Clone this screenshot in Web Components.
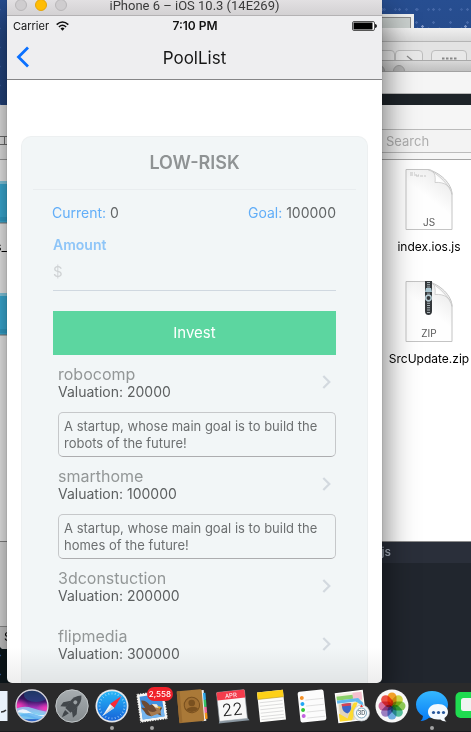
<!DOCTYPE html>
<html lang="en">
<head>
<meta charset="utf-8">
<title>PoolList</title>
<style>
html,body{margin:0;height:100%;overflow:hidden;background:#0e191e}
body{font-family:Inter,"Liberation Sans",sans-serif}
</style>
</head>
<body>
<desktop-scene></desktop-scene>
<script>
function define(name, markup, setup) {
  const t = document.createElement('template');
  t.innerHTML = markup;
  customElements.define(name, class extends HTMLElement {
    constructor() {
      super();
      this.attachShadow({ mode: 'open' }).append(t.content.cloneNode(true));
    }
    connectedCallback() { if (setup) setup(this, this.shadowRoot); }
  });
}

/* ---------- background windows ---------- */
define('toolbar-window', `
<style>
:host{display:block;overflow:hidden;background:#f4f4f4}
.title{height:14px;box-sizing:border-box;background:linear-gradient(#f0f0f0,#d9d9d9);border-bottom:1px solid #b5b5b5}
.tools{height:18px;display:flex;gap:8px;padding:8px 4px 0 0;box-sizing:border-box;justify-content:flex-end;background:#e3e3e3;overflow:hidden}
.tools span{flex:none;box-sizing:border-box;width:36px;height:22px;border:1px solid #bdbdbd;border-radius:4px;background:#e8e8e8}
.nav{display:flex}
.nav span+span{width:28px}
.tools svg{display:block}
</style>
<div class="title"></div>
<div class="tools">
 <div class="nav"><span></span><span><svg width="26" height="12"><path d="M11 5l6 5" stroke="#888" stroke-width="1.3" fill="none"/></svg></span></div>
 <span><svg width="34" height="12"><path d="M10 7.500h15" stroke="#888" stroke-width="2" stroke-dasharray="2.500 1.500" fill="none"/></svg></span>
</div>`);

define('plain-window', `
<style>
:host{display:block;background:#1e2429}
.title{height:12px;box-sizing:border-box;display:flex;justify-content:flex-end;padding:4px 66px 0 0;overflow:hidden;background:linear-gradient(#d8d8d8,#c0c0c0);border-top:1px solid #a9a9a9;border-bottom:1px solid #a2a2a2}
i{width:12px;height:12px;flex:none;box-sizing:border-box;border-radius:50%;background:#b0b0b0;border:1px solid #999;margin-left:8px}
.bar{height:22px;box-sizing:border-box;background:#f5f5f5;border-bottom:1px solid #bbb}
</style>
<div class="title"><i></i><i></i></div><div class="bar"></div>`);

define('file-item', `
<style>
:host{display:flex;flex-direction:column;align-items:center;gap:8px}
svg{display:block}
.name{font:12px/16px Inter,"Liberation Sans",sans-serif;color:#000;white-space:nowrap;min-height:16px}
:host([kind=folder]) .name{align-self:flex-end}
text{font:10px Inter,"Liberation Sans",sans-serif;fill:#5a5a5a}
</style>
<svg width="64" height="64"></svg><span class="name"><slot></slot></span>`, (h, r) => {
  const kind = h.getAttribute('kind');
  const id = 'g' + kind;
  const page = `<defs><linearGradient id="${id}" x1="0" y1="1" x2="1" y2="0"><stop offset=".5" stop-color="#fff"/><stop offset="1" stop-color="#dcdcdc"/></linearGradient><linearGradient id="p${id}" x1="0" y1="1" x2=".6" y2="0"><stop offset=".6" stop-color="#fefefe"/><stop offset="1" stop-color="#ececec"/></linearGradient></defs>
   <path d="M9 2.500h22c12 3 24 14 24 25v35H9z" fill="url(#p${id})" stroke="#c4c4c4"/>
   <path d="M31 2.500c6 0 8 6 7 13 9-1 17 4 17 12C53 19 42 7 31 2.500z" fill="url(#${id})" stroke="#c2c2c2" stroke-width=".7"/>`;
  r.querySelector('svg').innerHTML = kind === 'folder'
    ? '<path d="M0 14h64v42H0z" fill="#40bbe8"/><path d="M0 14h64v3H0z" fill="#8fdcf6"/><path d="M0 51h64M0 53h64" stroke="#2c9ecb"/><path d="M0 56h64" stroke="#888"/>'
    : kind === 'zip'
    ? page + '<path d="M28 2h7v30q0 4-3.500 4t-3.500-4z" fill="#34383b"/><path d="M31.500 3v32" stroke="#a9b4b9" stroke-width="3" stroke-dasharray="1 1.300"/><path d="M29 9h5l1 4h-7z" fill="#a7c4cf"/><circle cx="31.500" cy="19" r="2.700" fill="#34383b" stroke="#b5cbd3" stroke-width="1.500"/><text x="32" y="58" text-anchor="middle">ZIP</text>'
    : page + '<path d="M13 6h5M13 8h9M19 9h10" stroke="#bbb" stroke-width=".8" stroke-dasharray="3 1"/><text x="32" y="59" text-anchor="middle">JS</text>';
});

define('finder-window', `
<style>
:host{display:flex;flex-direction:column;background:#fff;overflow:hidden;box-sizing:border-box;border-bottom:1px solid #8d8d8d}
.bar{height:55px;box-sizing:border-box;border-bottom:1px solid #a5a5a5;background:#f6f6f6;display:flex;justify-content:space-between;align-items:flex-start;padding-top:24px}
.view{width:8px;height:9px;margin-top:7px;border:1px solid #777;border-left:0;box-sizing:border-box;background:linear-gradient(90deg,transparent 4px,#777 4px 5px,transparent 5px)}
input{width:92px;height:24px;box-sizing:border-box;border:solid #bbb;border-width:1px 0;background:#f3f3f3;padding:0 0 0 7px;font:13px/20px Inter,"Liberation Sans",sans-serif;border-radius:0;outline:0;-webkit-appearance:none;appearance:none}
input::placeholder{color:#aeaeae;opacity:1}
.body{flex:1;display:flex;justify-content:space-between;padding-top:7px}
.col{display:flex;flex-direction:column;gap:24px;width:84px}
.left{width:64px;margin-left:-57px}
</style>
<div class="bar"><span class="view"></span><input type="search" placeholder="Search" aria-label="Search"></div>
<div class="body">
 <div class="col left"><file-item kind="folder">s_</file-item><file-item kind="folder"></file-item></div>
 <div class="col"><file-item kind="js">index.ios.js</file-item><file-item kind="zip">SrcUpdate.zip</file-item></div>
</div>`);

define('code-window', `
<style>
:host{display:block;background:#21262e}
.tab{height:22px;background:#2a2f3a;display:flex;justify-content:flex-end;font:12px/22px Inter,"Liberation Sans",sans-serif;color:#aab2c0;padding-right:80px;font-weight:500}
</style>
<div class="tab">js</div>`);

define('side-window', `
<style>
:host{display:flex;flex-direction:column;background:#eee;border-radius:0 0 0 4px;overflow:hidden}
.body{flex:1;border-bottom:1px solid #999}
.foot{height:22px;background:#d8d8d8;font:12px/20px Inter,"Liberation Sans",sans-serif;padding-left:4px;color:#000}
</style>
<div class="body"></div><div class="foot">S</div>`);

/* ---------- phone simulator ---------- */
define('sim-titlebar', `
<style>
:host{display:flex;align-items:center;height:16px;box-sizing:border-box;border-bottom:1px solid #b4b2b4;background:linear-gradient(#e2e0e2,#d3d1d3);padding:0 60px 0 8px;overflow:hidden}
.dots{display:flex;gap:8px;padding-bottom:5px}
i{width:12px;height:12px;box-sizing:border-box;border-radius:50%;background:#cfcdcf;border:1px solid #b9b7b9}
i.on{background:#ffbd05;border-color:#e5a50a}
b{flex:1;text-align:center;font:13px/12px Roboto,Inter,sans-serif;color:#3a3a3a;white-space:nowrap;padding-bottom:3px}
</style>
<div class="dots"><i></i><i class="on"></i><i></i></div><b>iPhone 6 – iOS 10.3 (14E269)</b>`);

define('status-bar', `
<style>
:host{display:grid;grid-template-columns:1fr auto 1fr;align-items:center;height:20px;padding:0 5px 0 6px;font:11px/20px Inter,"Liberation Sans",sans-serif;color:#111}
.l{display:flex;align-items:center;gap:7px}
.t{font-weight:600;font-size:12px}
.r{display:flex;justify-content:flex-end}
</style>
<span class="l">Carrier<svg width="13" height="10" viewBox="0 0 13 10"><g fill="none" stroke="#111" stroke-width="1.600"><path d="M.7 3.700Q6.500-1.700 12.300 3.700"/><path d="M2.900 6Q6.500 2.500 10.100 6"/></g><path d="M4.500 7.500Q6.500 5.700 8.500 7.500L6.500 9.700z" fill="#111"/></svg></span>
<span class="t">7:10 PM</span>
<span class="r"><svg width="25" height="10" viewBox="0 0 25 10"><rect x=".5" y=".5" width="22" height="9" rx="1.500" fill="#fff" stroke="#555"/><rect x="1.500" y="1.500" width="19" height="7" fill="#000"/><path d="M23.500 3.500h.5q1 1.500 0 3h-.5z" fill="#000" stroke="#000" stroke-width=".7"/></svg></span>`);

define('nav-bar', `
<style>
:host{display:grid;grid-template-columns:40px 1fr 40px;align-items:center;height:43px;border-bottom:1px solid #858587;font-family:Inter,"Liberation Sans",sans-serif}
button{border:0;background:none;padding:0 0 2px 9px;height:43px;display:flex;align-items:center;cursor:pointer}
h1{margin:0;font-size:17px;line-height:24px;font-weight:400;color:#151515;text-align:center}
</style>
<button aria-label="Back"><svg width="14" height="22" viewBox="0 0 14 22"><path d="M12 1.500L2.500 11l9.500 9.500" fill="none" stroke="#0a70ff" stroke-width="2.800"/></svg></button><h1><slot></slot></h1><span></span>`);

define('company-row', `
<style>
:host{display:block}
a{display:flex;align-items:center;justify-content:space-between;min-height:58px;box-sizing:border-box;padding:9px 5px 13px;text-decoration:none}
strong,span{display:block;font-weight:400}
strong{font-size:16px;line-height:20px;color:#939797}
span{font-size:14px;line-height:16px;color:#5d6061}
p{margin:-1px 0 0 5px;border:1px solid #c6c8ca;border-bottom-color:#adadaf;border-radius:5px;padding:5px 0 4px 5px;font-size:13px;line-height:17px;color:#6c6f70}
</style>
<a href="#"><div><strong></strong><span></span></div><svg width="9" height="14" viewBox="0 0 9 14"><path d="M1.300 1l6 6-6 6" fill="none" stroke="#d3d9df" stroke-width="2.200"/></svg></a>`, (h, r) => {
  r.querySelector('strong').textContent = h.getAttribute('name');
  r.querySelector('span').textContent = 'Valuation: ' + h.getAttribute('valuation');
  const about = h.getAttribute('about');
  if (about) { const p = document.createElement('p'); p.textContent = about; r.append(p); }
});

define('pool-card', `
<style>
:host{display:block;background:#f2f6f7;border:1px solid #edf0f1;border-bottom:0;border-radius:10px 10px 0 0;padding:0 11px;box-sizing:border-box}
h2{margin:0;font-size:18px;line-height:52px;font-weight:600;color:#8f9394;text-align:center;border-bottom:1px solid #e9edef}
.in{padding:0 20px}
.row{display:flex;justify-content:space-between;font-size:14px;line-height:18px;padding:14px 0 15px;color:#626566;margin-left:-1px}
em{font-style:normal;color:#62aef8}
label{display:block;font-size:14px;line-height:16px;font-weight:600;color:#8ec5f8}
input{display:block;width:100%;height:38px;box-sizing:border-box;border:0;border-bottom:1px solid #d0d8e0;background:none;padding:0 0 1px;margin:0 0 20px;font:15px/20px Inter,"Liberation Sans",sans-serif;border-radius:0;outline:0}
input::placeholder{color:#cfd2d4;opacity:1}
button{display:block;width:100%;height:44px;border:0;background:#5cd6a0;color:#fff;font:15px/20px Inter,"Liberation Sans",sans-serif;cursor:pointer}
</style>
<h2>LOW-RISK</h2>
<div class="in">
 <div class="row"><span><em>Current:</em> 0</span><span><em>Goal:</em> 100000</span></div>
 <label for="amount">Amount</label><input id="amount" placeholder="$">
 <button>Invest</button>
 <slot></slot>
</div>`);

define('phone-window', `
<style>
:host{display:flex;flex-direction:column;background:#fff;border-radius:0 0 5px 5px;overflow:hidden;box-shadow:0 0 1px rgba(0,0,0,.5),0 14px 32px 2px rgba(0,0,0,.55)}
header{background:#eeeef0}
main{flex:1;min-height:0;overflow:hidden;padding:56px 14px 0;display:flex;flex-direction:column}
pool-card{flex:1 0 auto}
.fade{height:36px;margin-top:-36px;flex:none;position:relative;background:linear-gradient(rgba(0,0,0,0),rgba(0,0,0,.07));pointer-events:none}
</style>
<sim-titlebar></sim-titlebar>
<header><status-bar></status-bar><nav-bar>PoolList</nav-bar></header>
<main><pool-card>
 <company-row name="robocomp" valuation="20000" about="A startup, whose main goal is to build the robots of the future!"></company-row>
 <company-row name="smarthome" valuation="100000" about="A startup, whose main goal is to build the homes of the future!"></company-row>
 <company-row name="3dconstuction" valuation="200000"></company-row>
 <company-row name="flipmedia" valuation="300000"></company-row>
</pool-card></main>
<div class="fade"></div>`);

/* ---------- dock ---------- */
const ticks = Array.from({ length: 24 }, (_, i) => `<path d="M20 6.500v2" transform="rotate(${i * 15} 20 20)" stroke="#bfe6ff" stroke-width=".6"/>`).join('');
const petals = ['#f9a01b', '#d3d83a', '#8bcb50', '#4fc09a', '#6aaee6', '#9b7cc4', '#dc6a9f', '#f4493e']
  .map((c, i) => `<rect x="15.500" y="6.500" width="9" height="13.500" rx="4.500" fill="${c}" opacity=".95" style="mix-blend-mode:multiply" transform="rotate(${i * 45} 20 20)"/>`).join('');
const icons = {
  finder: '<path d="M4 5h31.500v30H4z" fill="#e9f1fa"/><path d="M29 26q3 0 5-2" stroke="#333" stroke-width="1.500" fill="none"/>',
  siri: `<defs><linearGradient id="s" x2="0" y2="1"><stop offset="0" stop-color="#1b1030"/><stop offset=".35" stop-color="#3d1668"/><stop offset=".55" stop-color="#a434b8"/><stop offset=".75" stop-color="#5fb4e8"/><stop offset="1" stop-color="#2456c0"/></linearGradient><clipPath id="sc"><circle cx="20" cy="20" r="15.500"/></clipPath><radialGradient id="sg"><stop offset="0" stop-color="#ff36b5"/><stop offset="1" stop-color="#ff36b5" stop-opacity="0"/></radialGradient></defs>
   <circle cx="20" cy="20" r="16" fill="url(#s)"/><g clip-path="url(#sc)"><ellipse cx="6" cy="20" rx="11" ry="8" fill="url(#sg)"/><ellipse cx="35" cy="23" rx="11" ry="7" fill="url(#sg)"/><ellipse cx="24" cy="9" rx="12" ry="7" fill="#1d5d93" opacity=".5"/><path d="M3 23Q12 19 20 22T37 26V33H3z" fill="#8fd9f5" opacity=".75"/><path d="M3 27Q10 20 18 26T37 27Q30 35 20 30T3 27z" fill="#fff" opacity=".8"/><path d="M3 31Q15 25 22 28T37 31Q28 35 20 32T3 31z" fill="#5cb0f0" opacity=".8"/></g><circle cx="20" cy="20" r="16" fill="none" stroke="#d5d5dc" stroke-width="1.300"/>`,
  launchpad: `<defs><linearGradient id="l" x2="0" y2="1"><stop stop-color="#a7adb0"/><stop offset="1" stop-color="#858b8e"/></linearGradient></defs><circle cx="20" cy="20" r="16.200" fill="url(#l)" stroke="#c3c8ca" stroke-width="1"/><g transform="rotate(42 20 20)" fill="#42474b"><path d="M20 6q5.500 5 4.500 13l-1 7h-7l-1-7Q14.500 11 20 6z"/><path d="M15.500 17l-4.500 6 .5 5 5-4zM24.500 17l4.500 6-.5 5-5-4z"/><path d="M17.500 27.500h5l-1 4-1.500 3.500-1.500-3.500z"/><circle cx="20" cy="15" r="2" fill="#9aa0a3"/></g>`,
  safari: `<defs><linearGradient id="f" x2="0" y2="1"><stop stop-color="#25b7f8"/><stop offset="1" stop-color="#1863d8"/></linearGradient></defs><circle cx="20" cy="20" r="16.500" fill="#e5e7ea"/><circle cx="20" cy="20" r="14.800" fill="url(#f)"/>${ticks}<path d="M29.500 10L22.200 22 18 18z" fill="#fa2b36"/><path d="M10.500 30L18 18l4.200 4z" fill="#f5f5f5"/><path d="M10.500 30l9.600-10 2.100 2z" fill="#cdd2d8"/>`,
  mail: `<g transform="rotate(-8 20 20)"><rect x="6" y="6" width="28" height="29" fill="#f5f5f3"/><rect x="6" y="6" width="28" height="29" fill="none" stroke="#292929" stroke-width="1.400" stroke-dasharray="1.200 1.400"/><path d="M9 9h22v23H9z" fill="#4290df"/><path d="M9 22h22v10H9z" fill="#75b5ef"/><path d="M10 13q5 0 8 6l3-1 2 3 7 2-3 4 1 4-5-3-5 2q-5-1-6-5l-3-5 4 1q-3-4-3-8z" fill="#6d4a32"/><path d="M15 23q4 5 9 2l-2-4 5 2 1 5-5 1-5 1z" fill="#a77a4e"/><path d="M20 18l5 1 2 4-4-1z" fill="#f8ead2"/><path d="M25 21l4 1-2 2z" fill="#e9b021"/></g>`,
  contacts: `<g transform="rotate(-5 20 20)"><path d="M29 5h4v31h-4z" fill="#eee"/><path d="M32 8h2.500v7H32z" fill="#2fa7e8"/><path d="M32 15h2.500v7H32z" fill="#35c463"/><path d="M32 22h2.500v6H32z" fill="#ed6a9b"/><path d="M32 28h2.500v6H32z" fill="#f4941c"/><rect x="6" y="4" width="25" height="32" rx="1.500" fill="#aa7938"/><path d="M6 4h3v32H6z" fill="#9a6b30"/><circle cx="20" cy="19" r="7.700" fill="#a17033" stroke="#79501f" stroke-width="1"/><circle cx="20" cy="17" r="3.300" fill="#79501f"/><path d="M14 23.500q1-2 4-2.500h4q3 .5 4 2.500-6 5-12 0z" fill="#79501f"/></g>`,
  calendar: `<g transform="rotate(-6 20 20)"><path d="M6 33l-1 3h31l-2-3z" fill="#8996a0"/><rect x="6" y="5" width="28" height="29" rx="1" fill="#f8f8f8" stroke="#9ba3aa" stroke-width=".6"/><path d="M6 5h28v8H6z" fill="#f43c4c"/><text x="20" y="11.500" text-anchor="middle" font-size="6" fill="#fff">APR</text><text x="20" y="29.500" text-anchor="middle" font-size="17" font-weight="300" fill="#202020">22</text></g>`,
  notes: `<g transform="rotate(-6 20 20)"><path d="M6.500 5h26v30h-26z" fill="#fdfdfb"/><path d="M6.500 5h26v7h-26z" fill="#fdd018"/><path d="M6.500 12h26" stroke="#b99a30" stroke-width=".6"/><path d="M8 15.500h23M8 19h23M8 22.500h23M8 26h23M8 29.500h23M8 32.500h23" stroke="#c9c9c9" stroke-width=".6"/></g>`,
  reminders: `<g transform="rotate(-6 20 20)"><rect x="7" y="4.500" width="26" height="31" rx="2" fill="#fcfcfc"/><path d="M14 13.500h18M14 19.500h18M14 25.500h18M14 31.500h18" stroke="#d5d5d5" stroke-width=".7"/><circle cx="10.700" cy="11" r="2" fill="#f5922a"/><circle cx="10.700" cy="17" r="2" fill="#22a7f5"/><circle cx="10.700" cy="23" r="2" fill="#36c73a"/><circle cx="10.700" cy="29" r="2" fill="#c362e0"/></g>`,
  maps: `<g transform="rotate(-7 19 20)"><path d="M5 6h27v29H5z" fill="#f3efe2"/><path d="M5 9h17v4H5z" fill="#8bd16b"/><path d="M22 7h9v8h-9z" fill="#f6c0cf"/><path d="M5 13h22l5 6v3l-8-6H5z" fill="#62b9ee"/><path d="M7 17h14v17H7z" fill="#e2d5ba"/><path d="M6 35V26l8 6 8-15h4l-8 18z" fill="#fdda30"/><path d="M10 17h9v4q0 4-4.500 6Q10 25 10 21z" fill="#3c67c8"/><path d="M10 17h9v2.500h-9z" fill="#d64455"/><rect x="5" y="6" width="27" height="29" fill="none" stroke="#fff" stroke-width="1.300"/></g><circle cx="29.500" cy="27" r="8" fill="#f5f7f8" stroke="#b8c0c5" stroke-width=".7"/><circle cx="29.500" cy="27" r="5" fill="#fff" stroke="#5b8eaa" stroke-width=".8"/><text x="29.500" y="29" text-anchor="middle" font-size="5.500" font-weight="600" fill="#53646d">3D</text><path d="M29.500 18.500l1.500 2.500h-3z" fill="#e33"/>`,
  photos: `<circle cx="20" cy="20" r="16.500" fill="#f7f7f7"/>${petals}`,
  messages: `<defs><linearGradient id="m" x2="0" y2="1"><stop stop-color="#35b8ff"/><stop offset="1" stop-color="#087cf6"/></linearGradient></defs><path d="M20 5c9 0 16 6 16 13.500S29 32 20 32l-3-.3q-3 3-8.500 3.300 2.500-2 2.500-5-7-4-7-11.500C4 11 11 5 20 5z" fill="url(#m)"/><path d="M26 18c6 0 10 3.500 10 8 0 2.500-1.500 4.500-3.500 6 0 1.500.5 2.500 2 3.500-3 0-5-1-6-2h-2.500c-6 0-10-3-10-7.500s4-8 10-8z" fill="#f4f9fd"/><g fill="#26569b"><circle cx="21.500" cy="26.500" r="1.600"/><circle cx="26.500" cy="26.500" r="1.600"/><circle cx="31.500" cy="26.500" r="1.600"/></g>`,
  facetime: `<rect x="3.500" y="6" width="34" height="26" rx="5" fill="#1fdc50"/><rect x="9" y="12" width="20" height="13" rx="2.500" fill="#f1f4f2"/>`
};
define('dock-icon', `
<style>
:host{display:flex;flex-direction:column;align-items:center;flex:none;width:40px;position:relative}
svg{display:block}
text{font-family:Inter,"Liberation Sans",sans-serif}
i{display:none;width:4px;height:4px;border-radius:50%;background:#a3a3a3}
:host([running]) i{display:block}
b{position:absolute;top:1px;right:-1px;min-width:18px;padding:0 2px;border-radius:7px;background:#f0222b;color:#fff;font:500 8px/14px Inter,"Liberation Sans",sans-serif;text-align:center;box-sizing:border-box}
b:empty{display:none}
</style>
<svg width="40" height="40" viewBox="0 0 40 40"></svg><i></i><b></b>`, (h, r) => {
  r.querySelector('svg').innerHTML = icons[h.getAttribute('app')];
  r.querySelector('b').textContent = h.getAttribute('badge') || '';
});

define('dock-bar', `
<style>
:host{display:flex;box-sizing:border-box;height:49px;padding-top:3px;background:#2a2a2b;border-bottom:1px solid #1b1b1e;overflow:hidden}
dock-icon:first-of-type{margin-left:-28px}
</style>
${Object.keys(icons).map(k => `<dock-icon app="${k}"${/safari|mail|messages/.test(k) ? ' running' : ''}${k === 'mail' ? ' badge="2,558"' : ''}></dock-icon>`).join('')}`);

/* ---------- desktop ---------- */
define('desktop-scene', `
<style>
:host{display:flex;flex-direction:column;height:100vh;overflow:hidden}
.space{flex:1;min-height:0;position:relative;overflow:hidden;background:
 radial-gradient(circle,#7f97c8 0 1px,transparent 1.500px) 14px 8px/43px 37px,
 radial-gradient(circle,#4668a8 0 1px,transparent 1.500px) 0 3px/17px 13px,
 radial-gradient(circle,#3c60a2 0 1px,transparent 1.500px) 5px 0/11px 19px,
 linear-gradient(#274e91,#254783 105px,#0e191e 500px)}
.space>*{position:absolute}
.thumb{top:14px;right:57px;width:60px;height:30px;box-sizing:border-box;background:#c9cfcd;border:3px solid #eef0f0;outline:1px solid #888;outline-offset:-4px}
toolbar-window{top:28px;left:50px;right:0;height:60px}
plain-window{top:60px;left:40px;right:0;height:60px}
code-window{top:541px;left:40px;right:0;bottom:0}
side-window{top:541px;left:0;width:50%;height:108px}
finder-window{top:105px;left:0;right:0;height:437px}
phone-window{top:0;left:7px;right:89px;bottom:0}
.under{left:0;width:60px;bottom:0;height:80px;background:#0d191d}
</style>
<div class="space">
 <div class="thumb"></div>
 <toolbar-window></toolbar-window><plain-window></plain-window>
 <side-window></side-window>
 <code-window></code-window>
 <finder-window></finder-window>
 <phone-window></phone-window>
</div>
<dock-bar></dock-bar>`);
</script>
</body>
</html>
